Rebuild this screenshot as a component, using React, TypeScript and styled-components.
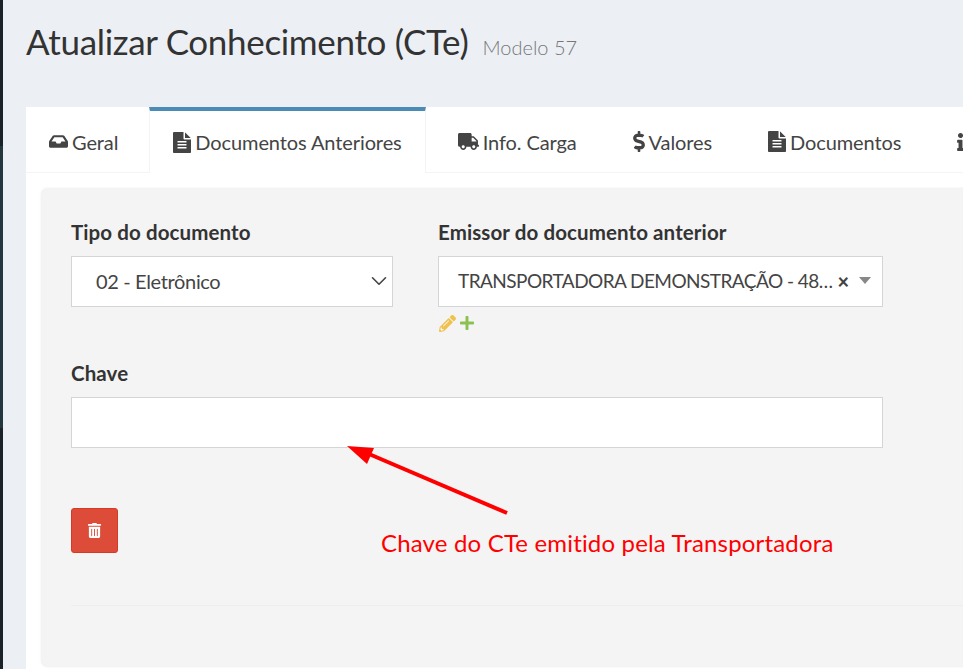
import React from 'react'
import styled, { createGlobalStyle } from 'styled-components'
import { FaInbox, FaPencilAlt, FaPlus, FaTruck, FaDollarSign, FaInfo, FaTrashAlt } from 'react-icons/fa'
import { ChevronDown } from 'lucide-react'

const GlobalStyle = createGlobalStyle`
  html, body {
    margin: 0;
    height: 100%;
    overflow: hidden;
    background: #ecf0f5;
  }
  body {
    font-family: "Lato", "Open Sans", sans-serif;
    color: #333;
  }
`

const Page = styled.div`
  display: flex;
  width: 963px;
  height: 669px;
  overflow: hidden;
`

const SideEdge = styled.div`
  flex: 0 0 3px;
  background: linear-gradient(#1a2328 0 146px, #24363e 146px 428px, #1a2328 428px);
`

const Main = styled.div`
  flex: 0 0 1040px;
  padding-left: 23px;
  position: relative;
`

const Heading = styled.div`
  display: flex;
  align-items: baseline;
  gap: 14px;
  height: 107px;
  padding-top: 18px;
  box-sizing: border-box;
`

const Title = styled.h1`
  margin: 0;
  font-size: 35px;
  font-weight: 400;
  line-height: 46px;
  letter-spacing: -0.33px;
  color: #333;
`

const Subtitle = styled.small`
  font-size: 20px;
  color: #777;
  font-weight: 300;
`

const Card = styled.div`
  background: #fff;
  border-radius: 3px 0 0 0;
  height: 562px;
`

const Tabs = styled.div`
  display: flex;
  height: 66px;
  box-sizing: border-box;
  border-bottom: 1px solid #f4f4f4;
`

const Tab = styled.div<{ $active?: boolean }>`
  display: flex;
  align-items: center;
  gap: 4px;
  padding: 0 ${({ $active }) => ($active ? '23px' : '25px')} 0 ${({ $active }) => ($active ? '23px' : '25px')};
  margin-right: ${({ $active }) => ($active ? '7px' : '6px')};
  font-size: 20px;
  letter-spacing: -0.1px;
  color: #444;
  white-space: nowrap;
  box-sizing: border-box;
  height: ${({ $active }) => ($active ? '66px' : '65px')};
  border-top: ${({ $active }) => ($active ? '4px solid #4a8cb5' : '4px solid transparent')};
  background: #fff;
  ${({ $active }) => $active && 'border-left: 1px solid #f4f4f4; border-right: 1px solid #f4f4f4;'}
  &:first-child {
    padding-left: 23px;
  }
  svg {
    flex: none;
    color: #444;
  }
`

const InboxIcon = styled(FaInbox)`
  width: 19px;
  height: 17px;
`

const TruckIcon = styled(FaTruck)`
  width: 21px;
  height: 17px;
`

const DollarIcon = styled(FaDollarSign)`
  width: 12px;
  height: 21px;
`

const InfoIcon = styled(FaInfo)`
  width: 7px;
  height: 18px;
`

const Panel = styled.div`
  margin: 16px 0 0 16px;
  height: 477px;
  box-sizing: border-box;
  padding: 29px 29px 0;
  background: #f4f4f4;
  border-radius: 5px;
  box-shadow: 0 0 3px rgba(0, 0, 0, 0.14);
`

const FieldRow = styled.div`
  display: flex;
  gap: 45px;
`

const Field = styled.div<{ $width: number }>`
  width: ${({ $width }) => $width}px;
`

const Label = styled.div`
  font-size: 20.5px;
  font-weight: 700;
  letter-spacing: 0.1px;
  color: #333;
  line-height: 28px;
  margin-bottom: 10px;
`

const Control = styled.div`
  display: flex;
  align-items: center;
  height: 51px;
  box-sizing: border-box;
  background: #fff;
  border: 1px solid #d3d5d9;
  font-size: 20px;
  color: #444;
`

const SelectControl = styled(Control)`
  padding: 0 0 2px 24px;
  justify-content: space-between;
  letter-spacing: -0.35px;
  svg {
    color: #444;
  }
`

const ComboControl = styled(Control)`
  padding: 0 11px 2px 19px;
`

const ComboValue = styled.span`
  flex: 1;
  white-space: nowrap;
  font-size: 19px;
  letter-spacing: -0.55px;
`

const ComboClear = styled.span`
  font-size: 20px;
  font-weight: 900;
  line-height: 1;
  color: #444;
  margin: 0 10px 0 0;
`

const ComboArrow = styled.span`
  width: 0;
  height: 0;
  border-left: 6.5px solid transparent;
  border-right: 6.5px solid transparent;
  border-top: 7px solid #888;
`

const ActionIcons = styled.div`
  display: flex;
  align-items: center;
  gap: 3px;
  height: 18px;
  margin-top: 7px;
  padding-left: 1px;
`

const ChaveField = styled.div`
  margin-top: 27px;
  width: 812px;
`

const DeleteButton = styled.button`
  display: flex;
  align-items: center;
  justify-content: center;
  width: 47px;
  height: 45px;
  margin-top: 60px;
  padding: 0;
  background: #dd4b39;
  border: 1px solid #d73925;
  border-radius: 3px;
  color: #fff;
  font-size: 15px;
`

const Divider = styled.hr`
  margin: 52px 0 0;
  border: 0;
  border-top: 1px solid #eee;
`

const ArrowDrawing = styled.svg`
  position: absolute;
  left: 342px;
  top: 443px;
`

const Annotation = styled.div`
  position: absolute;
  left: 378px;
  top: 527px;
  font-size: 24px;
  line-height: 32px;
  letter-spacing: 0.17px;
  color: #f00;
  white-space: nowrap;
`

// FontAwesome 4 fa-file-text; the FA5 one in react-icons is narrower
function FileTextIcon() {
  return (
    <svg width="18" height="21" viewBox="128 0 1536 1792" fill="currentColor">
      <path d="M1596 476q14 14 28 36h-472v-472q22 14 36 28zm-476 164h544v1056q0 40-28 68t-68 28h-1344q-40 0-68-28t-28-68v-1600q0-40 28-68t68-28h800v544q0 40 28 68t68 28zm160 736v-64q0-14-9-23t-23-9h-704q-14 0-23 9t-9 23v64q0 14 9 23t23 9h704q14 0 23-9t9-23zm0-256v-64q0-14-9-23t-23-9h-704q-14 0-23 9t-9 23v64q0 14 9 23t23 9h704q14 0 23-9t9-23zm0-256v-64q0-14-9-23t-23-9h-704q-14 0-23 9t-9 23v64q0 14 9 23t23 9h704q14 0 23-9t9-23z" />
    </svg>
  )
}

export default function App() {
  return (
    <Page>
      <GlobalStyle />
      <SideEdge />
      <Main>
        <Heading>
          <Title>Atualizar Conhecimento (CTe)</Title>
          <Subtitle>Modelo 57</Subtitle>
        </Heading>
        <Card>
          <Tabs>
            <Tab><InboxIcon />Geral</Tab>
            <Tab $active><FileTextIcon />Documentos Anteriores</Tab>
            <Tab><TruckIcon />Info. Carga</Tab>
            <Tab><DollarIcon />Valores</Tab>
            <Tab><FileTextIcon />Documentos</Tab>
            <Tab><InfoIcon /></Tab>
          </Tabs>
          <Panel>
            <FieldRow>
              <Field $width={322}>
                <Label>Tipo do documento</Label>
                <SelectControl>
                  02 - Eletrônico
                  <ChevronDown size={26} strokeWidth={1.5} />
                </SelectControl>
              </Field>
              <Field $width={445}>
                <Label>Emissor do documento anterior</Label>
                <ComboControl>
                  <ComboValue>TRANSPORTADORA DEMONSTRAÇÃO - 48…</ComboValue>
                  <ComboClear>×</ComboClear>
                  <ComboArrow />
                </ComboControl>
                <ActionIcons>
                  <FaPencilAlt color="#f0c14b" size={17} />
                  <FaPlus color="#8cc152" size={16} />
                </ActionIcons>
              </Field>
            </FieldRow>
            <ChaveField>
              <Label>Chave</Label>
              <Control />
            </ChaveField>
            <DeleteButton aria-label="Excluir">
              <FaTrashAlt />
            </DeleteButton>
            <Divider />
          </Panel>
        </Card>
        <ArrowDrawing width="170" height="80" viewBox="0 0 170 80">
          <line x1="162" y1="70" x2="24" y2="11" stroke="#f00" strokeWidth="4" />
          <polygon points="2,3 29,5 22,21" fill="#f00" />
        </ArrowDrawing>
        <Annotation>Chave do CTe emitido pela Transportadora</Annotation>
      </Main>
    </Page>
  )
}
